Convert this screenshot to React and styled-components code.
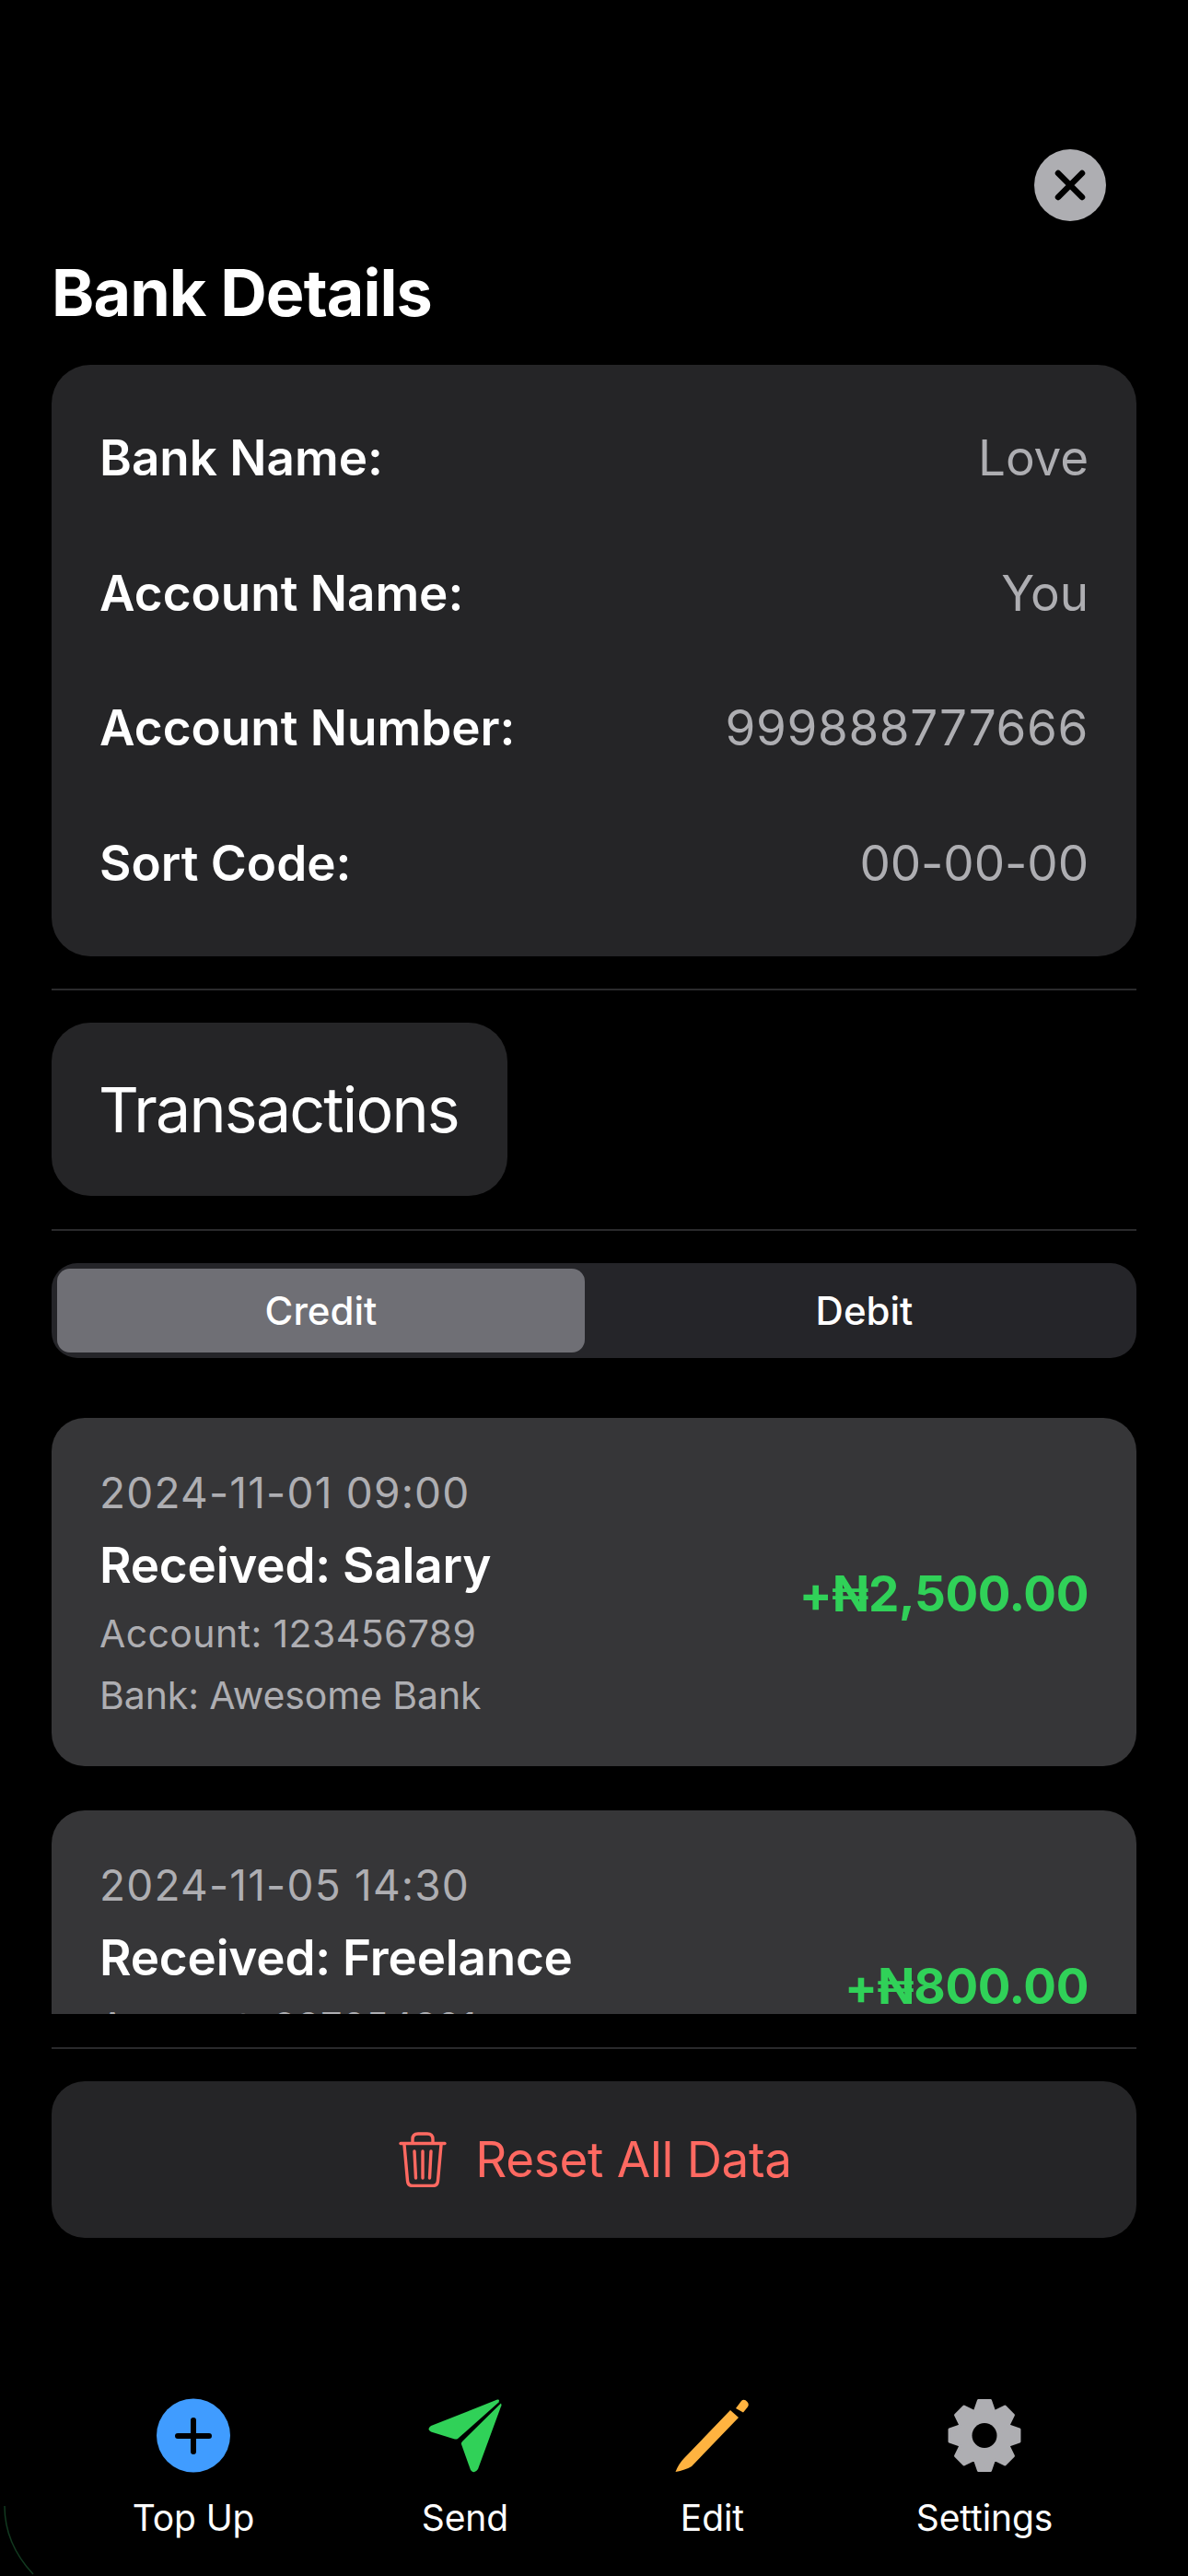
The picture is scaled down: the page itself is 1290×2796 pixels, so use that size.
import React from 'react'
import styled, { createGlobalStyle } from 'styled-components'

const GlobalStyle = createGlobalStyle`
  html, body {
    margin: 0;
    padding: 0;
    background: #000;
    font-family: Inter, "Liberation Sans", sans-serif;
    color: #fff;
  }
`

const Page = styled.div`
  position: relative;
  width: 1290px;
  height: 2796px;
  overflow: hidden;
  background: #000;
  padding: 162px 56px 0;
  box-sizing: border-box;
`

const CloseRow = styled.div`
  display: flex;
  justify-content: flex-end;
  padding-right: 33px;
`

const CloseButton = styled.div`
  width: 78px;
  height: 78px;
  border-radius: 50%;
  background: #aeaeb2;
  display: flex;
  align-items: center;
  justify-content: center;
`

const Title = styled.h1`
  margin: 37px 0 0;
  font-size: 70px;
  line-height: 82px;
  font-weight: 700;
  letter-spacing: -0.9px;
`

const DetailsCard = styled.div`
  margin-top: 37px;
  background: #252527;
  border-radius: 42px;
  padding: 28px 52px;
  height: 642px;
  box-sizing: border-box;
`

const DetailRow = styled.div`
  height: 146.6px;
  display: flex;
  align-items: center;
  justify-content: space-between;
  font-size: 53px;
`

const DetailLabel = styled.span`
  font-weight: 600;
  letter-spacing: 0;
`

const DetailValue = styled.span`
  color: #aeaeb2;
  font-weight: 400;
  letter-spacing: ${p => (p.$wide ? '0.65px' : '-0.1px')};
`

const Divider = styled.div`
  height: 2px;
  background: #2a2a2c;
  margin: ${p => p.$top}px 0 ${p => p.$bottom}px;
`

const SectionChip = styled.div`
  width: 495px;
  height: 188px;
  border-radius: 42px;
  background: #252527;
  display: flex;
  align-items: center;
  box-sizing: border-box;
  padding-left: 51px;
  font-size: 68px;
  font-weight: 400;
  letter-spacing: -1.8px;
`

const Segmented = styled.div`
  height: 103px;
  border-radius: 28px;
  background: #252529;
  padding: 6px;
  box-sizing: border-box;
  display: grid;
  grid-template-columns: 573px 1fr;
`

const Segment = styled.div`
  border-radius: 14px;
  background: ${p => (p.$active ? '#6f6f75' : 'transparent')};
  padding-left: ${p => (p.$active ? 0 : 14)}px;
  display: flex;
  align-items: center;
  justify-content: center;
  font-size: 42px;
  font-weight: 500;
  letter-spacing: 0;
`

const TransactionList = styled.div`
  margin-top: 65px;
  height: 647px;
  overflow: hidden;
  display: flex;
  flex-direction: column;
  gap: 48px;
`

const TransactionCard = styled.div`
  flex: none;
  height: 378px;
  border-radius: 36px;
  background: #363638;
  box-sizing: border-box;
  padding: 53px 52px 0;
  display: flex;
  align-items: center;
  justify-content: space-between;
`

const TransactionText = styled.div`
  display: flex;
  flex-direction: column;
  align-self: flex-start;
`

const DateText = styled.div`
  color: #aeaeb2;
  font-size: 46px;
  line-height: 56px;
  letter-spacing: 1.2px;
`

const TransactionTitle = styled.div`
  margin-top: 20px;
  font-size: 53px;
  line-height: 62px;
  font-weight: 600;
  letter-spacing: -0.2px;
`

const MetaText = styled.div`
  margin-top: ${p => p.$top}px;
  color: #aeaeb2;
  font-size: 41px;
  line-height: 50px;
  letter-spacing: ${p => p.$spacing}px;
`

const Amount = styled.div`
  color: #30d158;
  font-size: 53px;
  font-weight: 700;
  letter-spacing: -0.4px;
  margin-top: -50px;
`

const ResetButton = styled.div`
  height: 170px;
  border-radius: 36px;
  background: #252527;
  padding-left: 3px;
  box-sizing: border-box;
  display: flex;
  align-items: center;
  justify-content: center;
  gap: 31px;
  color: #ff6961;
  font-size: 53px;
  letter-spacing: -0.3px;
`

const BottomNav = styled.nav`
  margin: 174px 0 0 -3px;
  display: flex;
  justify-content: space-around;
`

const NavItem = styled.div`
  display: flex;
  flex-direction: column;
  align-items: center;
  gap: 25px;
`

const NavLabel = styled.span`
  font-size: 39px;
  line-height: 48px;
  font-weight: 400;
  letter-spacing: -0.1px;
`

const EdgeGlow = styled.svg`
  position: absolute;
  left: 0;
  bottom: 0;
`

const CloseIcon = () => (
  <svg width="34" height="34" viewBox="0 0 34 34" fill="none" stroke="#000" strokeWidth="6.5" strokeLinecap="round">
    <path d="M4 4 L30 30 M30 4 L4 30" />
  </svg>
)

const TrashIcon = () => (
  <svg width="52" height="60" viewBox="34 24 52 60" fill="none" stroke="#ff6961" strokeWidth="3.4" strokeLinecap="round" strokeLinejoin="round">
    <path d="M36 36.5 H84" />
    <path d="M49 36 V32 Q49 26 55 26 H65 Q71 26 71 32 V36" />
    <path d="M40 38 L43.5 77 Q44 82.5 49 82.5 H71 Q76 82.5 76.5 77 L80 38" />
    <path d="M51 45 L52.5 74 M60 45 V74 M69 45 L67.5 74" />
  </svg>
)

const TopUpIcon = () => (
  <svg width="80" height="81" viewBox="0 0 80 81">
    <circle cx="40" cy="40.5" r="40" fill="#409cff" />
    <path d="M40 24 V58 M23 41 H57" stroke="#000" strokeWidth="6" strokeLinecap="round" />
  </svg>
)

const SendIcon = () => (
  <svg width="80" height="81" viewBox="334 23 80 81" fill="#30d158">
    <path d="M409 24.5 Q412 24 410.5 27.5 L366 67 Q364.5 68 362 67.3 L337 59.5 Q332 56.5 337 53 Z" />
    <path d="M413 28.5 Q414 31 413 32 L388 100 Q384 106 380 101 L370 73 Q369.5 71.5 371 70 Z" />
  </svg>
)

const PencilIcon = () => (
  <svg width="80" height="81" viewBox="32 23 80 81" fill="#ffb340">
    <path d="M32.5 103 Q36 94 42 88 L92 36 L101 44 L50 97 Q43 101 32.5 103 Z" />
    <path d="M98 34 L104 26 Q107 23 110.5 27 Q113 30 110.5 33 L106 38.5 Z" />
  </svg>
)

const gearPath = () => {
  const pts = []
  for (let i = 0; i < 8; i++) {
    const a = (i * Math.PI) / 4 - Math.PI / 2
    const spread = [[29, -0.36], [38.5, -0.17], [38.5, 0.17], [29, 0.36]]
    spread.forEach(([r, d]) => {
      pts.push(`${(40 + r * Math.cos(a + d)).toFixed(2)} ${(40.5 + r * Math.sin(a + d)).toFixed(2)}`)
    })
  }
  return `M${pts.join(' L')} Z`
}

const GearIcon = () => (
  <svg width="80" height="81" viewBox="0 0 80 81">
    <path d={gearPath()} fill="#aeaeb2" stroke="#aeaeb2" strokeWidth="3" strokeLinejoin="round" />
    <circle cx="40" cy="40.5" r="13.5" fill="#000" />
  </svg>
)

const details = [
  ['Bank Name:', 'Love'],
  ['Account Name:', 'You'],
  ['Account Number:', '999888777666', true],
  ['Sort Code:', '00-00-00'],
]

const transactions = [
  { date: '2024-11-01 09:00', title: 'Received: Salary', account: '123456789', bank: 'Awesome Bank', amount: '+₦2,500.00' },
  { date: '2024-11-05 14:30', title: 'Received: Freelance', account: '987654321', bank: 'Freelance Bank', amount: '+₦800.00' },
]

const navItems = [
  { label: 'Top Up', icon: <TopUpIcon /> },
  { label: 'Send', icon: <SendIcon /> },
  { label: 'Edit', icon: <PencilIcon /> },
  { label: 'Settings', icon: <GearIcon /> },
]

export default function App() {
  return (
    <Page>
      <GlobalStyle />
      <CloseRow>
        <CloseButton>
          <CloseIcon />
        </CloseButton>
      </CloseRow>
      <Title>Bank Details</Title>
      <DetailsCard>
        {details.map(([label, value, wide]) => (
          <DetailRow key={label}>
            <DetailLabel>{label}</DetailLabel>
            <DetailValue $wide={wide}>{value}</DetailValue>
          </DetailRow>
        ))}
      </DetailsCard>
      <Divider $top={35} $bottom={35} />
      <SectionChip>Transactions</SectionChip>
      <Divider $top={36} $bottom={35} />
      <Segmented>
        <Segment $active>Credit</Segment>
        <Segment>Debit</Segment>
      </Segmented>
      <TransactionList>
        {transactions.map(t => (
          <TransactionCard key={t.date}>
            <TransactionText>
              <DateText>{t.date}</DateText>
              <TransactionTitle>{t.title}</TransactionTitle>
              <MetaText $top={18} $spacing={0.4}>Account: {t.account}</MetaText>
              <MetaText $top={17} $spacing={-0.1}>Bank: {t.bank}</MetaText>
            </TransactionText>
            <Amount>{t.amount}</Amount>
          </TransactionCard>
        ))}
      </TransactionList>
      <Divider $top={36} $bottom={35} />
      <ResetButton>
        <TrashIcon />
        <span>Reset All Data</span>
      </ResetButton>
      <BottomNav>
        {navItems.map(item => (
          <NavItem key={item.label}>
            {item.icon}
            <NavLabel>{item.label}</NavLabel>
          </NavItem>
        ))}
      </BottomNav>
      <EdgeGlow width="50" height="80" viewBox="0 0 50 80" fill="none">
        <path d="M5 4 Q5 45 36 78" stroke="#123a20" strokeWidth="1.5" />
      </EdgeGlow>
    </Page>
  )
}
